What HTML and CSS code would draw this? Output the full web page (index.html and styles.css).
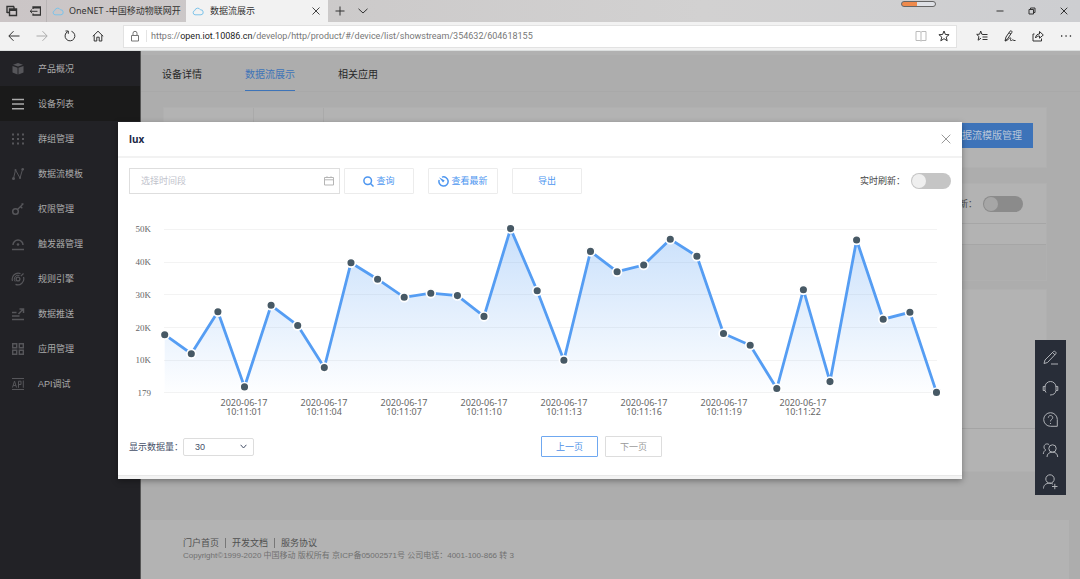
FILE: index.html
```html
<!DOCTYPE html>
<html lang="zh-CN">
<head>
<meta charset="utf-8">
<title>数据流展示</title>
<link rel="stylesheet" href="styles.css">
</head>
<body>
<header class="browser">
  <div class="titlebar">
    <button class="title-btn" aria-label="标签页"><svg width="12" height="12" viewBox="0 0 12 12"><path d="M1 8V1.500h7M3.500 4h7v6.500h-7zM3.500 5.200h7M1 7.500h2.500M8 1.500V4" stroke-width="1.400"/></svg></button>
    <button class="title-btn" aria-label="搁置标签页"><svg width="12" height="12" viewBox="0 0 12 12"><path d="M4 4V2h7.500v8H4V8.500M4 2.800h7.500" stroke-width="1.300"/><path d="M8.500 6.300H1M3 4.500 1.200 6.300 3 8.100"/></svg></button>
    <div class="tab">
      <svg class="cloud" width="12" height="9" viewBox="0 0 12 9"><path d="M3 7.800a2.200 2.200 0 0 1-.2-4.300A3 3 0 0 1 8.400 2.800a2.500 2.500 0 0 1 .6 5z"/></svg>
      <span class="tab-text">OneNET -中国移动物联网开</span>
    </div>
    <div class="tab tab-active">
      <svg class="cloud" width="12" height="9" viewBox="0 0 12 9"><path d="M3 7.800a2.200 2.200 0 0 1-.2-4.300A3 3 0 0 1 8.400 2.800a2.500 2.500 0 0 1 .6 5z"/></svg>
      <span class="tab-text">数据流展示</span>
      <button class="tab-close" aria-label="关闭标签页"><svg width="8" height="8" viewBox="0 0 8 8"><path d="M.5.5l7 7M7.500.5l-7 7"/></svg></button>
    </div>
    <button class="title-btn" aria-label="新建标签页"><svg width="10" height="10" viewBox="0 0 10 10"><path d="M5 .5v9M.5 5h9"/></svg></button>
    <button class="title-btn" aria-label="标签页菜单"><svg width="10" height="6" viewBox="0 0 10 6"><path d="M.5.8 5 5 9.500.8"/></svg></button>
    <div class="title-space"></div>
    <div class="meter"></div>
    <button class="win-btn" aria-label="最小化"><svg width="8" height="8" viewBox="0 0 8 8"><path d="M.5 4h7"/></svg></button>
    <button class="win-btn" aria-label="还原"><svg width="8" height="8" viewBox="0 0 8 8"><path d="M1 2.500h4.500V7H1zM2.500 2.500V1H7v4.500H5.500"/></svg></button>
    <button class="win-btn" aria-label="关闭"><svg width="8" height="8" viewBox="0 0 8 8"><path d="M.7.7l6.600 6.600M7.300.7.7 7.300"/></svg></button>
  </div>
  <div class="navbar">
    <button class="nav-btn" aria-label="后退"><svg width="12" height="12" viewBox="0 0 12 12"><path d="M11.500 6H1M5.500 1.200.8 6l4.700 4.800"/></svg></button>
    <button class="nav-btn nav-off" aria-label="前进"><svg width="12" height="12" viewBox="0 0 12 12"><path d="M.5 6H11M6.500 1.200 11.200 6l-4.700 4.800"/></svg></button>
    <button class="nav-btn" aria-label="刷新"><svg width="12" height="12" viewBox="0 0 12 12"><path d="M7.500 1.300a4.900 4.900 0 1 1-3.800.3M1.500 1h2.800v2.800"/></svg></button>
    <button class="nav-btn" aria-label="主页"><svg width="12" height="12" viewBox="0 0 12 12"><path d="M.8 6.300 6 1.200l5.200 5.100M2.200 5.200V11h2.600V7.200h2.400V11h2.600V5.200"/></svg></button>
    <div class="address">
      <svg class="lock" width="10" height="12" viewBox="0 0 10 12"><path d="M1.500 5.500h7V11h-7zM3 5.500V3.300a2 2 0 0 1 4 0v2.200"/></svg>
      <div class="url">https://<span class="host">open.iot.10086.cn</span>/develop/http/product/#/device/list/showstream/354632/604618155</div>
      <svg class="book" width="12" height="12" viewBox="0 0 12 12"><path d="M1 1.500h4L6 2.300l1-.8h4v9H7l-1 .6-1-.6H1zM6 2.300V11"/></svg>
      <button class="star" aria-label="收藏"><svg width="12" height="12" viewBox="0 0 12 12"><path d="M6 1l1.400 3.500 3.700.2-2.900 2.400 1 3.700L6 8.700l-3.200 2.100 1-3.700L.9 4.700l3.700-.2z"/></svg></button>
    </div>
    <button class="nav-btn" aria-label="收藏夹"><svg width="12" height="12" viewBox="0 0 12 12"><path d="M7 4.500 5.800 4.200 4.700 1 3.600 4.200.7 4.400l2.200 2.100-.8 3.700L5 8.200M7 4.500h4.500M6.500 7h5M6.500 9.500h5"/></svg></button>
    <button class="nav-btn" aria-label="笔记"><svg width="12" height="12" viewBox="0 0 12 12"><path d="M1 11 2 7 6 1.200c1-1 2.500 0 1.800 1.300L3.800 8.500 1 11c2.500 0 4.500-3.500 5.500-3.200.9.400-.8 2.600.2 2.800 1 .2 1.800-1.200 2.400-.6.4.6 1.200.6 2.400.5M5 2.800l2 1.300"/></svg></button>
    <button class="nav-btn" aria-label="共享"><svg width="12" height="12" viewBox="0 0 12 12"><path d="M2.500 4H1v7h8.500V8.500M3.500 8c.3-3 2-4 4-4V1.500L11.300 5 7.500 8.200V6c-1.800 0-3 .5-4 2z"/></svg></button>
    <button class="nav-btn" aria-label="更多"><svg width="12" height="12" viewBox="0 0 12 12"><path d="M1 6h1.300M5.400 6h1.300M9.800 6h1.300" stroke-width="1.300"/></svg></button>
  </div>
</header>

<div class="page">
  <nav class="sidebar">
    <a class="side-item" href="#"><svg width="14" height="14" viewBox="0 0 14 14"><path class="solid" d="M7 1l5 1.800L7 4.600 2 2.800zM1.500 4l5 1.800v6.700l-5-2zM12.500 4l-5 1.800v6.700l5-2z"/></svg>产品概况</a>
    <a class="side-item side-active" href="#"><svg width="14" height="14" viewBox="0 0 14 14"><path d="M1 2.500h12M1 7h12M1 11.700h12" stroke-width="1.600"/></svg>设备列表</a>
    <a class="side-item" href="#"><svg width="14" height="14" viewBox="0 0 14 14"><path d="M1 2.500h12M1 7h12M1 11.500h12" stroke-width="2" stroke-dasharray="2 3"/></svg>群组管理</a>
    <a class="side-item" href="#"><svg width="14" height="14" viewBox="0 0 14 14"><path d="M2.500 11.500 4.500 3l4.500 8 2.500-8.500"/><circle class="solid" cx="2.500" cy="11.500" r="1.500"/><circle class="solid" cx="11.700" cy="2.300" r="1.300"/><circle class="solid" cx="4.500" cy="3" r="1"/><circle class="solid" cx="9" cy="11" r="1"/></svg>数据流模板</a>
    <a class="side-item" href="#"><svg width="14" height="14" viewBox="0 0 14 14"><circle cx="4.500" cy="9.500" r="2.800" stroke-width="1.500"/><path d="M6.500 7.500 12 2M9.500 4.500l1.800 1.800M10.500 2h2" stroke-width="1.300"/></svg>权限管理</a>
    <a class="side-item" href="#"><svg width="14" height="14" viewBox="0 0 14 14"><path d="M2 8a5 5 0 0 1 10 0M1 12.500h12" stroke-width="1.500"/><circle class="solid" cx="7" cy="7.500" r="1.300"/></svg>触发器管理</a>
    <a class="side-item" href="#"><svg width="14" height="14" viewBox="0 0 14 14"><circle cx="7" cy="7" r="1.900" stroke-width="1.300"/><path d="M9.500 1.600A6 6 0 0 0 1.500 9M4.500 12.400A6 6 0 0 0 12.500 5M12.500 1.500 9.800 4.200" stroke-width="1.200"/><path d="M4.200 9.500A3.800 3.800 0 0 1 8.500 3.500"/></svg>规则引擎</a>
    <a class="side-item" href="#"><svg width="14" height="14" viewBox="0 0 14 14"><path d="M1 5.500h4.500M1 9h7.500M1 12.500h12M7.500 7 12 2.300M8.500 2H12.500v4" stroke-width="1.500"/></svg>数据推送</a>
    <a class="side-item" href="#"><svg width="14" height="14" viewBox="0 0 14 14"><path d="M1.700 1.700h4v4h-4zM8.300 1.700h4v4h-4zM1.700 8.300h4v4h-4zM8.300 8.300h4v4h-4z" stroke-width="1.400"/></svg>应用管理</a>
    <a class="side-item" href="#"><svg width="14" height="14" viewBox="0 0 14 14"><path d="M1 1.500h12M1 12.500h12M1.500 10.500 3.500 4l2 6.500M2.200 8.500h2.700M7.500 10.800V4.200H10v3.300H7.500M12.300 3.500v7.300"/></svg>API调试</a>
  </nav>

  <main class="main">
    <div class="tabs">
      <a class="page-tab" href="#">设备详情</a>
      <a class="page-tab page-tab-on" href="#">数据流展示</a>
      <a class="page-tab" href="#">相关应用</a>
    </div>
    <div class="cards">
      <section class="card card-stats">
        <div class="stat"></div><div class="stat"></div>
        <button class="manage">数据流模版管理</button>
      </section>
      <section class="card">
        <div class="card-head"><label class="refresh">实时刷新：<input class="switch switch-dim" type="checkbox"></label></div>
        <div class="card-row"></div>
        <div class="card-tail"></div>
      </section>
      <section class="card">
        <div class="list-space"></div>
        <div class="list-foot"></div>
      </section>
    </div>
    <footer class="footer">
      <div class="foot-links"><a href="#">门户首页</a><a href="#">开发文档</a><a href="#">服务协议</a></div>
      <div class="copyright">Copyright©1999-2020 中国移动 版权所有 京ICP备05002571号 公司电话：4001-100-866 转 3</div>
    </footer>
  </main>

  <aside class="tools">
    <button class="tool" aria-label="编辑"><svg width="17" height="17" viewBox="0 0 17 17"><path d="M2 14.500 3 11l8.500-8.500c1-1 3.500 1 2.300 2.300L5.500 13.500 2 14.500zM10.500 3.500l2.500 2.400M9 15h7"/></svg></button>
    <button class="tool" aria-label="客服"><svg width="17" height="17" viewBox="0 0 17 17"><path d="M3 7a5.500 5.500 0 0 1 11 0M3 6.500H1.200v4H3zM14 6.500h1.800v4H14zM14 10.500c-.5 3-2.500 4.500-6 4.500M3 10.500l1 2"/></svg></button>
    <button class="tool" aria-label="帮助"><svg width="17" height="17" viewBox="0 0 17 17"><path d="M15.300 15.300H8.500a6.800 6.800 0 1 1 6.800-6.800zM6.300 6.700c0-3 4.500-2.800 4.400 0 0 1.700-2.200 1.600-2.200 3.700M8.500 12v1"/></svg></button>
    <button class="tool" aria-label="社区"><svg width="17" height="17" viewBox="0 0 17 17"><circle cx="10.500" cy="6.500" r="3.700"/><path d="M5 15c0-3 2-4.800 5.500-4.800S15.500 12 15.700 15M7 2.500C4.500 1 2 2.500 2 5c0 1.500.8 2.500 1.800 3C2.200 8.800 1.500 10 1.300 12"/></svg></button>
    <button class="tool" aria-label="添加用户"><svg width="17" height="17" viewBox="0 0 17 17"><circle cx="8" cy="6" r="4.200"/><path d="M1.500 15.500c0-3.500 2.500-5.300 6-5.300 1.500 0 2.700.3 3.500 1M10 13.500h5.500M12.800 10.800v5.400"/></svg></button>
  </aside>
</div>

<div class="overlay">
  <div class="modal" role="dialog" aria-labelledby="dlg-title">
    <div class="modal-head">
      <h2 class="modal-title" id="dlg-title">lux</h2>
      <button class="modal-close" aria-label="关闭"><svg width="10" height="10" viewBox="0 0 10 10"><path d="M.7.7l8.600 8.600M9.300.7.7 9.300"/></svg></button>
    </div>
    <div class="filters">
      <div class="date">
        <input class="date-input" type="text" placeholder="选择时间段" aria-label="选择时间段">
        <svg width="10" height="10" viewBox="0 0 10 10"><path d="M.5 1.500h9v7.500h-9zM.5 3.800h9M3 .3v1.700M7 .3v1.700"/></svg>
      </div>
      <div class="actions">
        <button class="action"><svg width="11" height="11" viewBox="0 0 11 11"><circle cx="4.700" cy="4.700" r="3.800"/><path d="M7.500 7.500l3 3"/></svg>查询</button>
        <button class="action"><svg width="11" height="11" viewBox="0 0 11 11"><path d="M4 1.100A4.600 4.600 0 1 1 1.200 3.900"/><path class="solid" d="M1 1.200 6.700 4.600 5 6.500z"/></svg>查看最新</button>
        <button class="action">导出</button>
      </div>
      <label class="refresh refresh-live">实时刷新：<input class="switch" type="checkbox"></label>
    </div>
    <svg class="chart" viewBox="118 200 844 230" role="img" aria-label="lux">
      <defs>
        <linearGradient id="fill" x1="0" y1="0" x2="0" y2="1"><stop offset="0" stop-color="#559df3" stop-opacity=".32"/><stop offset="1" stop-color="#559df3" stop-opacity=".01"/></linearGradient>
        <marker id="dot" markerWidth="12" markerHeight="12" refX="6" refY="6" markerUnits="userSpaceOnUse"><circle cx="6" cy="6" r="4.400" fill="#475965" stroke="#fff" stroke-width="1.700"/></marker>
      </defs>
      <path class="grid" d="M164 229.500H937M164 262.500H937M164 294.500H937M164 327.500H937M164 360.500H937M164 392.500H937"/>
      <path class="area" d="M164.700 334.700 191.300 353.700 217.900 311.800 244.500 386.900 271.100 305.300 297.700 325.500 324.300 367.600 351 262.700 377.600 279.200 404.200 297.300 430.800 293.200 457.400 295.600 484 316.400 510.600 228.600 537.200 290.700 563.900 360.300 590.500 251.400 617.100 271.700 643.700 265 670.300 239.200 696.900 256.200 723.500 333.500 750.200 345.300 776.800 388.500 803.400 289.700 830 381.600 856.600 240 883.200 319.200 909.900 312.300 936.500 392.400H164.700z"/>
      <polyline class="line" points="164.700,334.700 191.300,353.700 217.900,311.800 244.500,386.900 271.100,305.300 297.700,325.500 324.300,367.600 351,262.700 377.600,279.200 404.200,297.300 430.800,293.200 457.400,295.600 484,316.400 510.600,228.600 537.200,290.700 563.900,360.300 590.500,251.400 617.100,271.700 643.700,265 670.300,239.200 696.900,256.200 723.500,333.500 750.200,345.300 776.800,388.500 803.400,289.700 830,381.600 856.600,240 883.200,319.200 909.900,312.300 936.500,392.400"/>
      <g class="y-axis"><text x="151" y="232">50K</text><text x="151" y="265">40K</text><text x="151" y="298">30K</text><text x="151" y="331">20K</text><text x="151" y="363">10K</text><text x="151" y="396">179</text></g>
      <g class="x-axis">
        <text><tspan x="244" y="406">2020-06-17</tspan><tspan x="244" dy="9">10:11:01</tspan></text>
        <text><tspan x="324" y="406">2020-06-17</tspan><tspan x="324" dy="9">10:11:04</tspan></text>
        <text><tspan x="404" y="406">2020-06-17</tspan><tspan x="404" dy="9">10:11:07</tspan></text>
        <text><tspan x="484" y="406">2020-06-17</tspan><tspan x="484" dy="9">10:11:10</tspan></text>
        <text><tspan x="564" y="406">2020-06-17</tspan><tspan x="564" dy="9">10:11:13</tspan></text>
        <text><tspan x="644" y="406">2020-06-17</tspan><tspan x="644" dy="9">10:11:16</tspan></text>
        <text><tspan x="724" y="406">2020-06-17</tspan><tspan x="724" dy="9">10:11:19</tspan></text>
        <text><tspan x="803" y="406">2020-06-17</tspan><tspan x="803" dy="9">10:11:22</tspan></text>
      </g>
    </svg>
    <div class="pager">
      <div class="amount">
        <label for="amount">显示数据量：</label>
        <div class="select-box">
          <select class="select" id="amount"><option>30</option><option>50</option></select>
          <svg width="7" height="5" viewBox="0 0 7 5"><path d="M.6.8 3.500 4 6.400.8"/></svg>
        </div>
      </div>
      <div class="pages">
        <button class="page-btn page-btn-on">上一页</button>
        <button class="page-btn">下一页</button>
      </div>
    </div>
    <div class="modal-foot"></div>
  </div>
</div>
</body>
</html>
```
FILE: styles.css
```css
* { box-sizing: border-box; }
body {
  margin: 0;
  min-height: 100vh;
  display: flex;
  flex-direction: column;
  position: relative;
  font: 9px/12px "Liberation Sans", "Noto Sans CJK SC", sans-serif;
  background: #adadad;
  color: #444;
}
button, input, select { font: inherit; color: inherit; margin: 0; }
button { border: 0; padding: 0; background: none; display: flex; align-items: center; justify-content: center; }
a { color: inherit; text-decoration: none; }
svg { fill: none; stroke: currentColor; stroke-width: 1; flex: none; }
.solid { fill: currentColor; stroke: none; }

/* Browser frame */
.browser { font-family: "Noto Sans", "Noto Sans CJK SC", sans-serif; color: #333; }
.titlebar { display: flex; height: 22px; background: linear-gradient(90deg, #cbc5c6, #cccaca 30%, #d2d1d1 65%, #cdced1); }
.title-btn { width: 23px; }
.tab { display: flex; align-items: center; gap: 5px; width: 140px; padding: 0 5px; border-left: 1px solid #b9b5b6; overflow: hidden; }
.tab-active { width: 142px; background: #f2f2f2; border: 0; gap: 6px; padding: 0 8px 0 6px; }
.tab-text { flex: 1; white-space: nowrap; overflow: hidden; }
.cloud { color: #7cc3ea; }
.tab-close { color: #444; }
.title-space { flex: 1; }
.meter { width: 35px; height: 6px; margin: 1px 48px 0 0; border: 1px solid #666; border-radius: 3px; background: linear-gradient(90deg, #ef8a4c 45%, #dfe1e6 45%); }
.win-btn { width: 32px; }
.navbar { display: flex; align-items: center; height: 29px; background: #f2f2f2; border-bottom: 1px solid #dcdfdf; }
.nav-btn { width: 28px; height: 28px; }
.nav-off { color: #aaa; }
.address { flex: 1; display: flex; align-items: center; height: 23px; margin: 0 11px; background: #fff; border: 1px solid #e2e2e2; }
.lock { margin: 0 6px; color: #777; }
.url { flex: 1; padding-left: 4px; border-left: 1px solid #e4e4e4; color: #777; font-family: Roboto, sans-serif; white-space: nowrap; overflow: hidden; }
.host { color: #222; }
.book { color: #bbb; }
.star { width: 29px; padding-left: 4px; }

/* Console page */
.page { flex: 1; display: flex; position: relative; }
.sidebar { width: 141px; flex: none; background: #222226; color: #aaa; border-right: 1px solid #555; }
.side-item { display: flex; align-items: center; gap: 13px; height: 35px; padding-left: 11px; }
.side-item svg { color: #56565a; }
.side-active { background: #1a1a1a; }
.side-active svg { color: #aaa; }
.main { flex: 1; display: flex; flex-direction: column; min-width: 0; }
.tabs { display: flex; gap: 43px; height: 41px; padding: 4px 21px 0; border-top: 4px solid #b1b1b1; border-bottom: 1px solid #a9a9a9; font-size: 10px; color: #282828; }
.page-tab { line-height: 32px; height: 32px; }
.page-tab-on { color: #3e74b8; border-bottom: 1px solid #3e74b8; }
.cards { flex: 1; display: flex; flex-direction: column; gap: 15px; padding: 15px 33px 15px 22px; }
.card { background: #b3b3b3; border: 1px solid #b0b0b0; }
.card-stats { display: flex; align-items: flex-start; height: 61px; padding-right: 13px; }
.stat { width: 90px; align-self: stretch; border-right: 1px solid #aaa; }
.stat + .stat { width: 70px; }
.manage { height: 25px; margin: 15px 0 0 auto; padding: 0 11px; background: #3d73b9; color: #b9c6d8; font-size: 10px; }
.card-head { display: flex; justify-content: flex-end; height: 39px; padding-right: 23px; }
.refresh { display: flex; align-items: center; gap: 6px; color: #444; }
.switch { appearance: none; width: 40px; height: 16px; padding: 1px; border-radius: 8px; background: #c5c5c5; }
.switch::before { content: ""; display: block; width: 14px; height: 14px; border-radius: 50%; background: #efefef; }
.switch:checked::before { margin-left: auto; }
.switch-dim { background: #8b8b8b; }
.switch-dim::before { background: #a6a6a6; }
.card-row { height: 22px; border: 1px solid #a6a6a6; border-width: 1px 0; }
.card-tail { height: 35px; background: #aeaeae; }
.card + .card + .card { margin-top: -7px; }
.list-space { height: 139px; border-bottom: 1px solid #a4a4a4; }
.list-foot { height: 42px; }
.footer { min-height: 59px; margin-right: 11px; padding: 17px 42px; background: #b3b3b3; color: #707070; }
.foot-links { display: flex; color: #505050; }
.foot-links a { line-height: 10px; height: 10px; margin: 1px 0; padding-right: 6px; }
.foot-links a + a { padding-left: 6px; border-left: 1px solid #777; }
.copyright { padding-top: 1px; font-size: 8px; }
.tools { position: absolute; right: 14px; top: 289px; background: #282d38; }
.tool { width: 31px; height: 31px; padding-top: 4px; color: #aeb1b6; }

/* Dialog */
.overlay { position: absolute; inset: 122px 118px auto; }
.modal { background: #fff; box-shadow: 0 2px 6px rgba(0, 0, 0, .35); }
.modal-head { display: flex; align-items: center; justify-content: space-between; height: 36px; padding: 0 11px; border-bottom: 2px solid #f2f2f2; }
.modal-title { margin: 0; font: bold 10px/12px "Noto Sans", sans-serif; color: #1d2947; }
.modal-close { color: #999; }
.filters { display: flex; align-items: center; gap: 4px; padding: 10px 11px 6px; }
.date { display: flex; align-items: center; width: 211px; height: 26px; padding: 0 5px 0 11px; border: 1px solid #dedede; color: #b5b5b5; }
.date-input { flex: 1; min-width: 0; border: 0; padding: 0; outline: 0; background: none; }
.date-input::placeholder { color: #bfc3cc; }
.actions { display: flex; gap: 14px; }
.action { width: 70px; height: 26px; gap: 2px; border: 1px solid #ececec; border-radius: 1px; color: #4d96f0; }
.action svg { stroke-width: 1.500; }
.refresh-live { margin-left: auto; }
.chart { display: block; width: 100%; height: auto; }
.grid { stroke: #f3f3f3; }
.area { fill: url(#fill); stroke: none; }
.line { stroke: #559df3; stroke-width: 2.800; marker-start: url(#dot); marker-mid: url(#dot); marker-end: url(#dot); }
.chart text { fill: #666; stroke: none; font-size: 9px; }
.y-axis { font-family: "Liberation Serif", serif; text-anchor: end; }
.x-axis { font-family: "Noto Sans", sans-serif; text-anchor: middle; }
.pager { display: grid; grid-template-columns: 1fr 1fr; align-items: center; padding: 6px 11px 18px; }
.amount { display: flex; align-items: center; color: #455068; }
.select-box { display: grid; grid-template-columns: 71px; align-items: center; }
.select-box > * { grid-area: 1 / 1; }
.select-box svg { justify-self: end; margin-right: 7px; pointer-events: none; }
.select { appearance: none; height: 18px; padding: 0 11px; border: 1px solid #ddd; border-radius: 2px; background: #fff; }
.pages { display: flex; gap: 7px; padding-left: 1px; }
.page-btn { width: 57px; height: 21px; border: 1px solid #ddd; border-radius: 1px; color: #999; }
.page-btn-on { border-color: #6fa8f0; color: #4d8fe8; }
.modal-foot { height: 4px; background: #f3f3f3; border-top: 1px solid #e8e8e8; }
```
